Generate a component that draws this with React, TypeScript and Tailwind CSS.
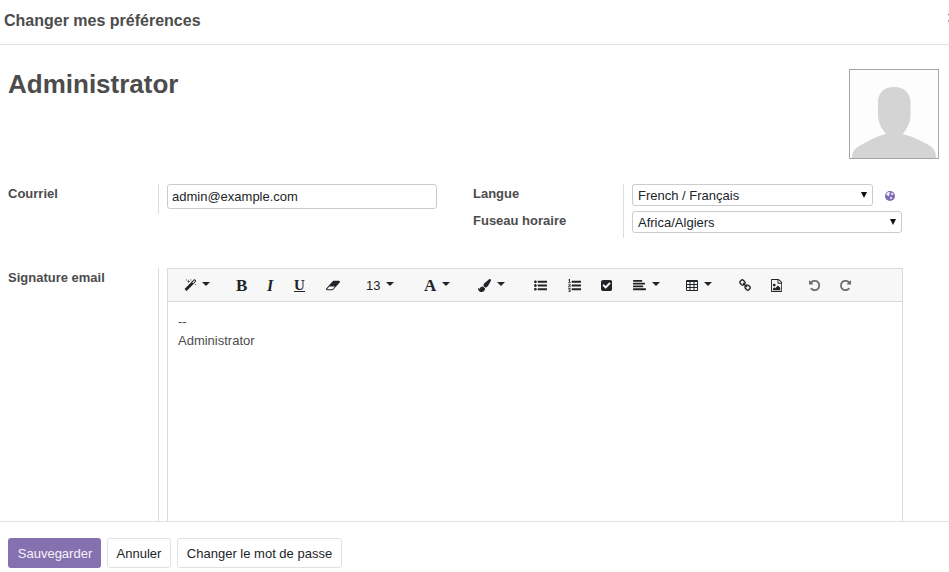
import type { ReactNode } from "react";

const ICONS = {
  magic:
    "M1254 581l293-293-107-107-293 293zm447-293q0 27-18 45l-1286 1286q-18 18-45 18t-45-18l-198-198q-18-18-18-45t18-45l1286-1286q18-18 45-18t45 18l198 198q18 18 18 45zm-1351-190l98 30-98 30-30 98-30-98-98-30 98-30 30-98zm350 162l196 60-196 60-60 196-60-196-196-60 196-60 60-196zm930 478l98 30-98 30-30 98-30-98-98-30 98-30 30-98zm-640-640l98 30-98 30-30 98-30-98-98-30 98-30 30-98z",
  eraser:
    "M896 1408l336-384h-768l-336 384h768zm1013-1077q15 34 9.5 71.5t-30.5 65.5l-896 1024q-38 44-96 44h-768q-38 0-69.5-20.5t-47.5-54.5q-15-34-9.5-71.5t30.5-65.5l896-1024q38-44 96-44h768q38 0 69.5 20.5t47.5 54.5z",
  brush:
    "M1615 0q70 0 122.5 46.5t52.5 116.5q0 63-45 151-332 629-465 752-97 91-218 91-126 0-216.5-92.5t-90.5-219.5q0-128 92-212l638-579q59-54 130-54zm-909 1034q39 76 106.5 130t150.5 76l1 71q4 213-129.5 347t-348.5 134q-123 0-218-46.5t-152.5-127.5-86.5-183-29-220q7 5 41 30t62 44.5 59 36.5 46 17q41 0 55-37 25-66 57.5-112.5t69.5-76 88-47.5 103-25.5 125-10.5z",
  listUl:
    "M384 1408q0 80-56 136t-136 56-136-56-56-136 56-136 136-56 136 56 56 136zm0-512q0 80-56 136t-136 56-136-56-56-136 56-136 136-56 136 56 56 136zm1408 416v192q0 13-9.5 22.5t-22.5 9.5h-1216q-13 0-22.5-9.5t-9.5-22.5v-192q0-13 9.5-22.5t22.5-9.5h1216q13 0 22.5 9.5t9.5 22.5zm-1408-928q0 80-56 136t-136 56-136-56-56-136 56-136 136-56 136 56 56 136zm1408 416v192q0 13-9.5 22.5t-22.5 9.5h-1216q-13 0-22.5-9.5t-9.5-22.5v-192q0-13 9.5-22.5t22.5-9.5h1216q13 0 22.5 9.5t9.5 22.5zm0-512v192q0 13-9.5 22.5t-22.5 9.5h-1216q-13 0-22.5-9.5t-9.5-22.5v-192q0-13 9.5-22.5t22.5-9.5h1216q13 0 22.5 9.5t9.5 22.5z",
  listOl:
    "M381 1620q0 80-54.5 126t-135.5 46q-106 0-172-66l57-88q49 45 106 45 29 0 50.5-14.5t21.5-42.5q0-64-105-56l-26-56q8-10 32.5-43.5t42.5-54 37-38.5v-1q-16 0-48.5 1t-48.5 1v53h-106v-152h333v88l-95 115q51 12 81 49t30 88zm2-627v159h-362q-6-36-6-54 0-51 23.5-93t56.5-68 66-47.5 56.5-43.5 23.5-45q0-25-14.5-38.5t-39.5-13.5q-46 0-81 58l-85-59q24-51 71.5-79.5t105.5-28.5q73 0 123 41.5t50 112.5q0 50-34 91.5t-75 64.5-75.5 50.5-35.5 52.5h127v-60h105zm1409 319v192q0 13-9.5 22.5t-22.5 9.5h-1216q-13 0-22.5-9.5t-9.5-22.5v-192q0-14 9-23t23-9h1216q13 0 22.5 9.5t9.5 22.5zm-1408-899v99h-335v-99h107q0-41 .5-122t.5-121v-12h-2q-8 17-50 54l-71-76 136-127h106v404h108zm1408 387v192q0 13-9.5 22.5t-22.5 9.5h-1216q-13 0-22.5-9.5t-9.5-22.5v-192q0-14 9-23t23-9h1216q13 0 22.5 9.5t9.5 22.5zm0-512v192q0 13-9.5 22.5t-22.5 9.5h-1216q-13 0-22.5-9.5t-9.5-22.5v-192q0-13 9.5-22.5t22.5-9.5h1216q13 0 22.5 9.5t9.5 22.5z",
  check:
    "M685 1299l614-614q19-19 19-45t-19-45l-102-102q-19-19-45-19t-45 19l-467 467-211-211q-19-19-45-19t-45 19l-102 102q-19 19-19 45t19 45l358 358q19 19 45 19t45-19zm851-883v960q0 119-84.5 203.5t-203.5 84.5h-960q-119 0-203.5-84.5t-84.5-203.5v-960q0-119 84.5-203.5t203.5-84.5h960q119 0 203.5 84.5t84.5 203.5z",
  align:
    "M64 1280h1664a64 64 0 0 1 64 64v128a64 64 0 0 1-64 64h-1664a64 64 0 0 1-64-64v-128a64 64 0 0 1 64-64zM64 896h1280a64 64 0 0 1 64 64v128a64 64 0 0 1-64 64h-1280a64 64 0 0 1-64-64v-128a64 64 0 0 1 64-64zM64 512h1536a64 64 0 0 1 64 64v128a64 64 0 0 1-64 64h-1536a64 64 0 0 1-64-64v-128a64 64 0 0 1 64-64zM64 128h1152a64 64 0 0 1 64 64v128a64 64 0 0 1-64 64h-1152a64 64 0 0 1-64-64v-128a64 64 0 0 1 64-64z",
  table:
    "M160 128h1344a160 160 0 0 1 160 160v1216a160 160 0 0 1-160 160h-1344a160 160 0 0 1-160-160v-1216a160 160 0 0 1 160-160zM138 414v276h346v-276zM622 414v276h415v-276zM1175 414v276h346v-276zM138 828v276h346v-276zM622 828v276h415v-276zM1175 828v276h346v-276zM138 1242v276h346v-276zM622 1242v276h415v-276zM1175 1242v276h346v-276z",
  chain:
    "M1456 1216q0-40-28-68l-208-208q-28-28-68-28-42 0-72 32 3 3 19 18.5t21.5 21.5 15 19 13 25.5 3.5 27.5q0 40-28 68t-68 28q-15 0-27.5-3.5t-25.5-13-19-15-21.5-21.5-18.5-19q-33 31-33 73 0 40 28 68l206 207q27 27 68 27 40 0 68-26l147-146q28-28 28-67zm-703-705q0-40-28-68l-206-207q-28-28-68-28-39 0-68 27l-147 146q-28 28-28 67 0 40 28 68l208 208q27 27 68 27 42 0 72-31-3-3-19-18.5t-21.5-21.5-15-19-13-25.5-3.5-27.5q0-40 28-68t68-28q15 0 27.5 3.5t25.5 13 19 15 21.5 21.5 18.5 19q33-31 33-73zm895 705q0 120-85 203l-147 146q-83 83-203 83-121 0-204-85l-206-207q-83-83-83-203 0-123 88-209l-88-88q-86 88-208 88-120 0-204-84l-208-208q-84-84-84-204t85-203l147-146q83-83 203-83 121 0 204 85l206 207q83 83 83 203 0 123-88 209l88 88q86-88 208-88 120 0 204 84l208 208q84 84 84 204z",
  image:
    "M1468 380q28 28 48 76t20 88v1152q0 40-28 68t-68 28h-1344q-40 0-68-28t-28-68v-1600q0-40 28-68t68-28h896q40 0 88 20t76 48zm-444-244v376h376q-10-29-22-41l-313-313q-12-12-41-22zm384 1528v-1024h-416q-40 0-68-28t-28-68v-416h-768v1536h1280zm-128-448v320h-1024v-192l192-192 128 128 384-384zm-832-192q-80 0-136-56t-56-136 56-136 136-56 136 56 56 136-56 136-136 56z",
  undo:
    "M1536 896q0 156-61 298t-164 245-245 164-298 61q-172 0-327-72.5t-264-204.5q-7-10-6.5-22.5t8.5-20.5l137-138q10-9 25-9 16 2 23 12 73 95 179 147t225 52q104 0 198.5-40.5t163.5-109.5 109.5-163.5 40.5-198.5-40.5-198.5-109.5-163.5-163.5-109.5-198.5-40.5q-98 0-188 35.5t-160 101.5l137 138q31 30 14 69-17 40-59 40h-448q-26 0-45-19t-19-45v-448q0-42 40-59 39-17 69 14l130 129q107-101 244.5-156.5t284.5-55.5q156 0 298 61t245 164 164 245 61 298z",
};

function Icon({ name, w, className = "" }: { name: keyof typeof ICONS; w: number; className?: string }) {
  return (
    <svg viewBox={`0 0 ${w} 1792`} style={{ width: (w * 13) / 1792 }} className={`h-[13px] shrink-0 fill-current ${className}`}>
      <path fillRule={name === "table" ? "evenodd" : "nonzero"} d={ICONS[name]} />
    </svg>
  );
}

function Tool({ size, gap, children }: { size: string; gap?: string; children: ReactNode }) {
  return (
    <button className={`flex h-[34px] shrink-0 items-center ${size}`}>
      {children}
      {gap && <span className={`mb-[3px] border-x-4 border-t-4 border-x-transparent border-t-[#212529] ${gap}`} />}
    </button>
  );
}

function Select({ value, width }: { value: string; width: string }) {
  return (
    <div className={`flex h-[22px] items-center justify-between rounded-[3px] border border-[#ccc] bg-white pr-[5px] pl-[5px] text-[#212529] ${width}`}>
      <span className="pt-[2px] leading-[18px]">{value}</span>
      <svg viewBox="0 0 6 6" className="h-[6px] w-[6px] fill-[#111]">
        <path d="M0 0h6L3 6z" />
      </svg>
    </div>
  );
}

export default function App() {
  return (
    <div className="flex h-[572px] w-[949px] flex-col overflow-hidden bg-white font-['Liberation_Sans',Arial,sans-serif] text-[13px] leading-[19.5px] text-[#4c4c4c]">
      <header className="flex h-[45px] shrink-0 items-start justify-between border-b border-[#dee2e6] pt-[9px] pl-1">
        <h4 className="text-[16px] leading-6 font-bold">Changer mes préférences</h4>
        <span className="-mr-[9px] text-[19px] leading-[18px] font-bold text-[#7f7f7f]">×</span>
      </header>

      <main className="min-h-0 flex-1 overflow-hidden pl-2">
        <div className="flex h-[139px] items-start justify-between pt-6 pr-[10px]">
          <h1 className="text-[26px] leading-[31px] font-bold">Administrator</h1>
          <div className="h-[90px] w-[90px] border border-[#a5a5a5] bg-[#fdfdfd]">
            <svg viewBox="0 0 88 88" className="h-[88px] w-[88px] fill-[#d4d4d4]">
              <path d="M44 17C54 17 60 23 60.500 31V46C60 54 56 60 52.500 64C62 66 71 71 77 74C84 78 86 81 86 88H2C2 81 6 77 13 74C20 70 27 66 36 64C32 59 28.500 54 28 46V31C28.500 23 34 17 44 17Z" />
            </svg>
          </div>
        </div>

        <div className="flex h-[54px]">
          <label className="w-[150px] font-bold">Courriel</label>
          <div className="h-[30px] w-[315px] border-l border-[#ddd] pl-2">
            <div className="flex h-[25px] w-[270px] items-center rounded-[3px] border border-[#ccc] px-1 text-[#212529]">admin@example.com</div>
          </div>
          <div className="flex w-[150px] flex-col gap-[7.500px] font-bold">
            <label>Langue</label>
            <label>Fuseau horaire</label>
          </div>
          <div className="flex flex-col gap-[5px] border-l border-[#ddd] pl-2">
            <div className="flex items-center">
              <Select value="French / Français" width="w-[241px]" />
              <svg viewBox="0 0 10 10" className="mt-[2px] ml-3 h-[10px] w-[10px]">
                <circle cx="5" cy="5" r="5" fill="#7c69b2" />
                <path fill="#fff" fillOpacity=".9" d="M1.800 1.900L3.400 1l1.300.3.5 1-1.300 1 .7.7-.8 1.200-1-.2-.8-.9-.8-.3zM6.200 1.500l1.500.6.8 1.400-1.300.8-1.200-.8.5-1zM5.200 5.800l1.700.4.3.9-1.300 1.500-.8-1.300z" />
              </svg>
            </div>
            <Select value="Africa/Algiers" width="w-[270px]" />
          </div>
        </div>

        <div className="mt-[30px] flex h-[260px]">
          <label className="w-[150px] font-bold">Signature email</label>
          <div className="border-l border-[#ddd] pl-2">
            <div className="h-[300px] w-[736px] border border-[#dadada] bg-white">
              <div className="flex h-[33px] items-center border-b border-[#dadada] bg-[#f7f7f7] pt-px pl-4 text-[#212529]">
                <Tool size="w-[52px]" gap="ml-[6px]"><Icon name="magic" w={1664} /></Tool>
                <Tool size="w-[30px]"><b className="font-['Liberation_Serif',serif] text-[17px]">B</b></Tool>
                <Tool size="w-[28px]"><b className="pl-px font-['Liberation_Serif',serif] text-[16px] italic">I</b></Tool>
                <Tool size="w-[32px]"><b className="border-b border-current pb-px font-['Liberation_Serif',serif] text-[15px] leading-[10px]">U</b></Tool>
                <Tool size="w-[40px]"><Icon name="eraser" w={1920} /></Tool>
                <Tool size="w-[58px]" gap="ml-[6px]">13</Tool>
                <Tool size="w-[54px]" gap="ml-[6px]"><b className="font-['Liberation_Serif',serif] text-[17px]">A</b></Tool>
                <Tool size="w-[56px]" gap="ml-[6px]"><Icon name="brush" w={1792} /></Tool>
                <Tool size="w-[34px]"><Icon name="listUl" w={1792} /></Tool>
                <Tool size="w-[33px]"><Icon name="listOl" w={1792} /></Tool>
                <Tool size="w-[32px]"><Icon name="check" w={1536} /></Tool>
                <Tool size="w-[53px]" gap="ml-[6px]"><Icon name="align" w={1792} /></Tool>
                <Tool size="w-[53px]" gap="ml-[6px]"><Icon name="table" w={1664} /></Tool>
                <Tool size="w-[32px]"><Icon name="chain" w={1664} /></Tool>
                <Tool size="w-[38px]"><Icon name="image" w={1536} /></Tool>
                <Tool size="w-[31px]"><Icon name="undo" w={1536} className="opacity-65" /></Tool>
                <Tool size="w-[31px]"><Icon name="undo" w={1536} className="-scale-x-100 opacity-65" /></Tool>
              </div>
              <div className="px-[10px] pt-[10px] leading-[19px]">
                <p>--</p>
                <p>Administrator</p>
              </div>
            </div>
          </div>
        </div>
      </main>

      <footer className="flex h-[51px] shrink-0 items-start gap-[6px] border-t border-[#dee2e6] pt-4 pl-2 text-[#212529]">
        <button className="h-[30px] w-[93px] rounded-[3px] bg-[#8671b0] pt-[2px] pl-px text-[#f4f1f8]">Sauvegarder</button>
        <button className="h-[30px] w-[64px] rounded-[3px] border border-[#dee2e6] bg-white pt-[2px]">Annuler</button>
        <button className="h-[30px] w-[165px] rounded-[3px] border border-[#dee2e6] bg-white pt-[2px]">Changer le mot de passe</button>
      </footer>
    </div>
  );
}
